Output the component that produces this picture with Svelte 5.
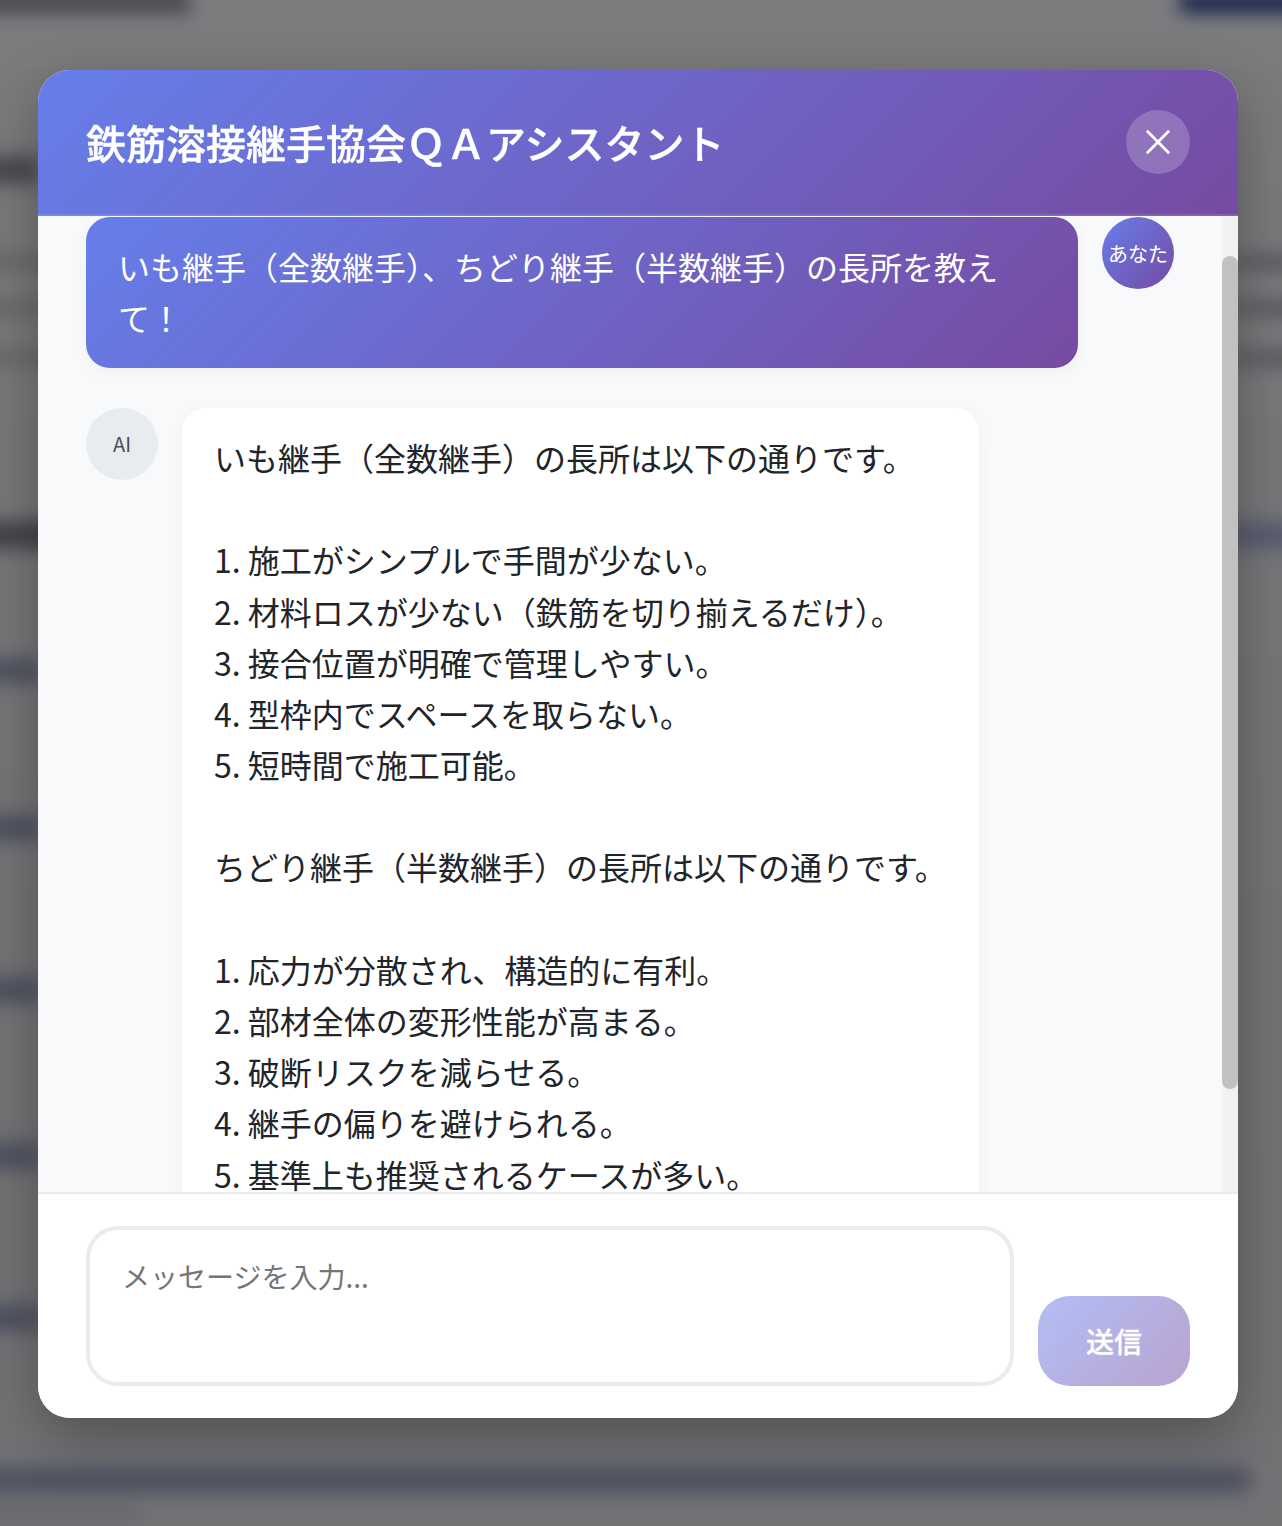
<script>
	import { onMount } from 'svelte';

	// blurred page behind the modal
	const rows = [
		{ gap: 0, h: 24, tone: 'dark', w: 220 },
		{ gap: 142, h: 28, tone: 'dark', w: 70 },
		{ gap: 70, h: 16, tone: 'edge', w: 1342 },
		{ gap: 30, h: 16, tone: 'edge', w: 1342 },
		{ gap: 34, h: 16, tone: 'edge', w: 1342 },
		{ gap: 155, h: 28, tone: 'mixed', w: 1342 },
		{ gap: 110, h: 24, tone: 'blue', w: 70 },
		{ gap: 132, h: 26, tone: 'blue', w: 70 },
		{ gap: 136, h: 26, tone: 'blue', w: 70 },
		{ gap: 140, h: 26, tone: 'blue', w: 70 },
		{ gap: 136, h: 26, tone: 'blue', w: 70 },
		{ gap: 136, h: 26, tone: 'blue', w: 1280 },
		{ gap: 12, h: 14, tone: 'soft', w: 170 }
	];

	const title = '鉄筋溶接継手協会\uFF31\uFF21アシスタント';

	const answer = `いも継手（全数継手）の長所は以下の通りです。

1. 施工がシンプルで手間が少ない。
2. 材料ロスが少ない（鉄筋を切り揃えるだけ）。
3. 接合位置が明確で管理しやすい。
4. 型枠内でスペースを取らない。
5. 短時間で施工可能。

ちどり継手（半数継手）の長所は以下の通りです。

1. 応力が分散され、構造的に有利。
2. 部材全体の変形性能が高まる。
3. 破断リスクを減らせる。
4. 継手の偏りを避けられる。
5. 基準上も推奨されるケースが多い。`;

	let list;

	onMount(() => {
		list.scrollTop = 47;
	});
</script>

<div class="backdrop">
	<div class="page">
		{#each rows as r}
			<div class="row {r.tone}" style="margin-top: {r.gap}px; height: {r.h}px; width: {r.w}px"></div>
		{/each}
		<div class="topbtn"></div>
	</div>
</div>

<div class="overlay">
	<div class="modal">
		<div class="header">
			<h2>{title}</h2>
			<button class="close" aria-label="閉じる">
				<svg width="28" height="28" viewBox="0 0 28 28" fill="none" stroke="#fff" stroke-width="3">
					<path d="M2 2 L26 26 M26 2 L2 26" />
				</svg>
			</button>
		</div>

		<div class="chat">
			<div class="messages" bind:this={list}>
				<div class="message user">
					<div class="bubble">いも継手（全数継手）、ちどり継手（半数継手）の長所を教えて！</div>
					<div class="avatar">あなた</div>
				</div>
				<div class="message ai">
					<div class="avatar">AI</div>
					<div class="bubble">{answer}</div>
				</div>
			</div>
			<div class="track"><div class="thumb"></div></div>
		</div>

		<div class="inputarea">
			<textarea placeholder="メッセージを入力..."></textarea>
			<button class="send" disabled>送信</button>
		</div>
	</div>
</div>

<style>
	:global(body) {
		background: #7a7a7d;
		font-family: 'Noto Sans CJK JP', 'Noto Sans', sans-serif;
	}
	* {
		box-sizing: border-box;
	}
	.backdrop {
		height: 1526px;
		overflow: hidden;
	}
	.page {
		position: relative;
		width: 1342px;
		height: 1566px;
		margin: -10px 0 0 -30px;
		overflow: hidden;
		filter: blur(9px);
		background: linear-gradient(#7c7c7f, #747477 60%, #727275);
	}
	.row.dark {
		background: #4a4a4e;
	}
	.row.soft {
		background: #66666a;
	}
	.row.blue {
		background: #4e5160;
	}
	.row.edge {
		background: linear-gradient(90deg, #68686b, #68686b 92%, #525256);
	}
	.row.mixed {
		background: linear-gradient(90deg, #434347, #434347 6%, #5a5c70 94%);
	}
	.topbtn {
		position: absolute;
		top: 0;
		right: 0;
		width: 132px;
		height: 24px;
		background: #1f2a4c;
	}
	.overlay {
		position: fixed;
		inset: 0;
		display: flex;
		padding: 70px 44px 108px 38px;
	}
	.modal {
		flex: 1;
		min-width: 0;
		display: flex;
		flex-direction: column;
		overflow: hidden;
		background: #fff;
		border-radius: 32px;
		box-shadow: 0 20px 60px rgba(0, 0, 0, 0.3);
	}
	.header {
		height: 146px;
		flex-shrink: 0;
		display: flex;
		align-items: center;
		justify-content: space-between;
		padding: 0 48px;
		color: #fff;
		background: linear-gradient(135deg, #667eea 0%, #764ba2 100%);
		border-bottom: 2px solid rgba(255, 255, 255, 0.1);
	}
	h2 {
		margin: 0;
		font-size: 40px;
		font-weight: 500;
		-webkit-text-stroke: 0.4px #fff;
	}
	.close {
		width: 64px;
		height: 64px;
		padding: 0;
		display: flex;
		align-items: center;
		justify-content: center;
		border: none;
		border-radius: 50%;
		background: rgba(255, 255, 255, 0.2);
	}
	.close svg {
		width: 26px;
		height: 26px;
	}
	.chat {
		flex: 1;
		min-height: 0;
		display: flex;
	}
	.messages {
		flex: 1;
		min-width: 0;
		overflow-y: scroll;
		padding: 48px 48px 8px;
		background: #f8f9fa;
	}
	.track {
		width: 16px;
		flex-shrink: 0;
		background: #f1f1f1;
	}
	.thumb {
		height: 833px;
		margin-top: 40px;
		background: #c1c1c1;
		border-radius: 8px;
	}
	.message {
		display: flex;
		align-items: flex-start;
		gap: 24px;
		margin-bottom: 40px;
	}
	.message.user {
		justify-content: flex-end;
	}
	.avatar {
		width: 72px;
		height: 72px;
		flex-shrink: 0;
		display: flex;
		align-items: center;
		justify-content: center;
		border-radius: 50%;
		font-size: 20px;
	}
	.user .avatar {
		color: #fff;
		background: linear-gradient(135deg, #667eea 0%, #764ba2 100%);
	}
	.ai .avatar {
		color: #495057;
		background: #e9ecef;
	}
	.bubble {
		padding: 24px 32px;
		border-radius: 24px;
		font-size: 32px;
		line-height: 1.6;
		white-space: pre-wrap;
		box-shadow: 0 4px 16px rgba(0, 0, 0, 0.04);
	}
	.user .bubble {
		width: 992px;
		padding-bottom: 24.6px;
		color: #fff;
		background: linear-gradient(135deg, #667eea 0%, #764ba2 100%);
	}
	.ai .bubble {
		max-width: 797px;
		color: #212529;
		background: #fff;
	}
	.inputarea {
		height: 226px;
		flex-shrink: 0;
		display: flex;
		align-items: flex-end;
		gap: 24px;
		padding: 32px 48px;
		background: #fff;
		border-top: 2px solid #e9ecef;
	}
	textarea {
		flex: 1;
		height: 160px;
		padding: 30px 32px;
		border: 4px solid #e9ecef;
		border-radius: 32px;
		outline: none;
		resize: none;
		font-family: inherit;
		font-size: 28px;
		line-height: 1.2;
		background: #fff;
	}
	.send {
		width: 152px;
		height: 90px;
		border: none;
		border-radius: 32px;
		color: #fff;
		font-family: inherit;
		font-size: 28px;
		font-weight: 500;
		-webkit-text-stroke: 0.3px #fff;
		background: linear-gradient(135deg, #667eea 0%, #764ba2 100%);
		opacity: 0.5;
	}
</style>
